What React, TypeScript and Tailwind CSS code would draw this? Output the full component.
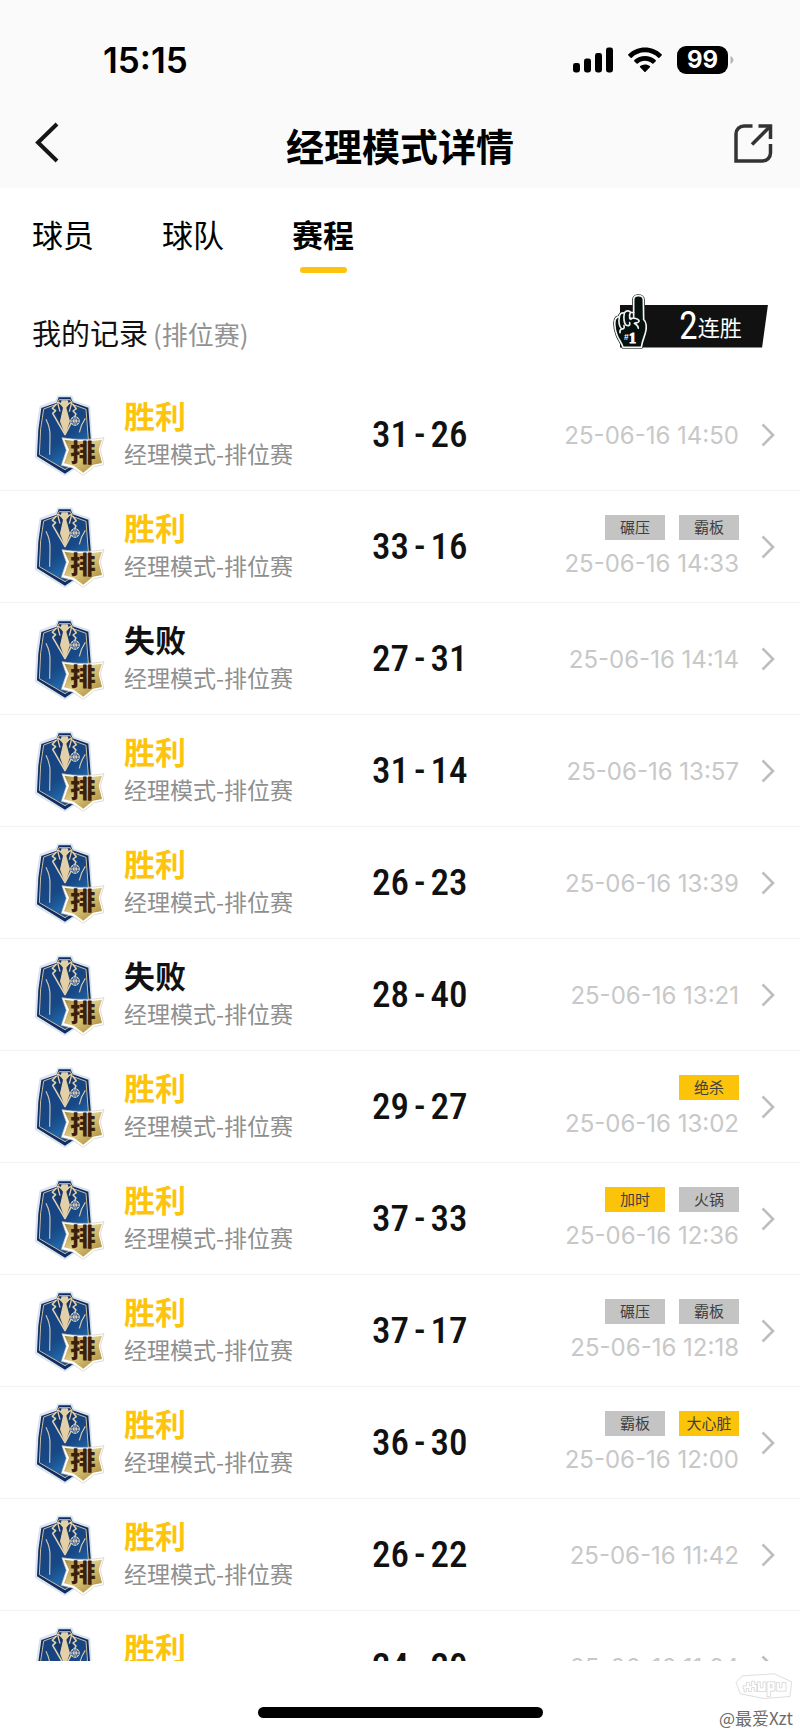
import { useId } from 'react';

type Tag = { label: string; hot?: boolean };
type Match = { win: boolean; home: number; away: number; time: string; tags?: Tag[] };

const matches: Match[] = [
  { win: true, home: 31, away: 26, time: '25-06-16 14:50' },
  { win: true, home: 33, away: 16, time: '25-06-16 14:33', tags: [{ label: '碾压' }, { label: '霸板' }] },
  { win: false, home: 27, away: 31, time: '25-06-16 14:14' },
  { win: true, home: 31, away: 14, time: '25-06-16 13:57' },
  { win: true, home: 26, away: 23, time: '25-06-16 13:39' },
  { win: false, home: 28, away: 40, time: '25-06-16 13:21' },
  { win: true, home: 29, away: 27, time: '25-06-16 13:02', tags: [{ label: '绝杀', hot: true }] },
  { win: true, home: 37, away: 33, time: '25-06-16 12:36', tags: [{ label: '加时', hot: true }, { label: '火锅' }] },
  { win: true, home: 37, away: 17, time: '25-06-16 12:18', tags: [{ label: '碾压' }, { label: '霸板' }] },
  { win: true, home: 36, away: 30, time: '25-06-16 12:00', tags: [{ label: '霸板' }, { label: '大心脏', hot: true }] },
  { win: true, home: 26, away: 22, time: '25-06-16 11:42' },
  { win: true, home: 24, away: 20, time: '25-06-16 11:24' },
];

const tabs = ['球员', '球队', '赛程'];

function StatusBar() {
  return (
    <div className="flex h-[118px] items-center justify-between pr-[66px] pl-[103px]">
      <span className="pt-[2px] font-['Inter',sans-serif] text-[35px] leading-10 font-semibold text-black">15:15</span>
      <div className="flex items-center gap-[15px] pt-px">
        <svg width="40" height="26" viewBox="0 0 40 26" aria-hidden="true">
          <rect x="0" y="16" width="7" height="9.5" rx="2.4" />
          <rect x="11" y="11.5" width="7" height="14" rx="2.4" />
          <rect x="22" y="6" width="7" height="19.5" rx="2.4" />
          <rect x="33" y="0.5" width="7" height="25" rx="2.4" />
        </svg>
        <svg width="34" height="26" viewBox="0 0 34 26" aria-hidden="true">
          <path d="M17 .5C23.300 .5 29 2.900 33.600 7.200a.9.9 0 0 1 0 1.300l-2.200 2.200a.9.9 0 0 1-1.200 0C26.600 7.300 22 5.300 17 5.300S7.400 7.300 3.800 10.700a.9.9 0 0 1-1.200 0L.4 8.500a.9.9 0 0 1 0-1.300C5 2.900 10.700.5 17 .5z" />
          <path d="M17 9c4 0 7.700 1.500 10.600 4.100a.9.9 0 0 1 0 1.300l-2.200 2.200a.9.9 0 0 1-1.200 0C22.200 14.800 19.700 13.800 17 13.800s-5.200 1-7.200 2.800a.9.9 0 0 1-1.200 0l-2.200-2.200a.9.9 0 0 1 0-1.300C9.300 10.500 13 9 17 9z" />
          <path d="M17 17.400c1.800 0 3.500.6 4.900 1.700.4.300.4.900 0 1.200l-4.300 4.400a.9.9 0 0 1-1.200 0l-4.300-4.400c-.4-.3-.4-.9 0-1.200a7.900 7.900 0 0 1 4.900-1.700z" />
        </svg>
        <div className="flex items-center gap-[2px]">
          <span className="flex h-7 w-[51px] items-center justify-center rounded-[9px] bg-black font-['Inter',sans-serif] text-[24px] leading-7 font-bold text-white">
            99
          </span>
          <svg width="4" height="8" viewBox="0 0 4 8" aria-hidden="true">
            <path d="M.5 0C2.300 1 3.400 2.300 3.400 4S2.300 7 .5 8z" fill="#b5b5b5" />
          </svg>
        </div>
      </div>
    </div>
  );
}

function Crest() {
  const id = useId();
  const coat = `${id}coat`;
  const gold = `${id}gold`;
  return (
    <svg className="h-[82px] w-[71px] shrink-0" viewBox="42 45 213 246" role="img" aria-label="排位赛">
      <defs>
        <linearGradient id={coat} x1="0" y1="0" x2="0.5" y2="1">
          <stop offset="0" stopColor="#173f7c" />
          <stop offset="0.65" stopColor="#184886" />
          <stop offset="0.88" stopColor="#2066a8" />
          <stop offset="1" stopColor="#174c88" />
        </linearGradient>
        <linearGradient id={gold} x1="0" y1="0" x2="1" y2="1">
          <stop offset="0" stopColor="#a98a3f" />
          <stop offset="0.45" stopColor="#dccb85" />
          <stop offset="0.65" stopColor="#c9af5e" />
          <stop offset="1" stopColor="#a5853a" />
        </linearGradient>
      </defs>
      <path d="M113 51h43l5 14 48 17 6 96v56l-80 55-89-53 4-88 10-66 48-17z" fill="#dbe8f6" stroke="#c9d9ec" strokeWidth="2" />
      <path d="M116 55h36l6 15 47 16 7 92v54l-77 52-84-52 4-80 9-65 46-16z" fill="#122d5e" />
      <path d="M117 62h34l6 14 41 15 7 90v46l-70 45-77-45 4-78 9-59 41-15z" fill={`url(#${coat})`} stroke="#cdbf9e" strokeWidth="3" />
      <path d="M112 66h44l8 28-29 76-31-76z" fill="#17386c" />
      <path d="M112 68l22 14 22-14M112 68l8 30M156 68l-8 30" fill="none" stroke="#e0cfaa" strokeWidth="4" strokeLinejoin="round" />
      <path d="M125 64h18l4 12-8 10 11 41-15 42-15-42 9-41-8-10z" fill="#e3d0a8" />
      <path
        d="M110 74l-13 14 10 7-9 8 37 64 33-62-9-9 10-7-12-15"
        fill="none"
        stroke="#e3d3ae"
        strokeWidth="4.500"
        strokeLinejoin="round"
      />
      <g fill="none" stroke="#d6d0c2" strokeWidth="3">
        <circle cx="165" cy="126" r="13" fill="#1b4785" />
        <path d="M152 126h26M165 113v26M157 116c5 6 5 14 0 20M173 116c-5 6-5 14 0 20" />
      </g>
      <path d="M78 121c9 18 13 34 12 52l-1 54M196 118c-10 14-15 28-18 42" fill="none" stroke="#d0c5aa" strokeWidth="3.500" />
      <path d="M126 176c42 7 84 7 126 0l-11 36 11 45-29 6-33 26-32-22-34-8 15-45z" fill="#fff" stroke="#cfcabd" strokeWidth="2" />
      <path d="M133 182c38 6 76 6 113 0l-10 30 10 40-27 5-29 24-29-21-29-7 15-41z" fill={`url(#${gold})`} />
      <text x="189" y="248" textAnchor="middle" fontSize="76" fontWeight="900" fill="#3b210b" fontFamily="'Noto Sans CJK SC', sans-serif">
        排
      </text>
    </svg>
  );
}

function FoamFinger() {
  return (
    <svg className="absolute top-[-11px] left-[-7px] h-[55px] w-[34px]" viewBox="68 40 102 165" aria-hidden="true">
      <path
        d="M98 200c-4-14-12-22-17-34-6-15-9-33-7-45 1-9 7-13 13-12 0-9 7-14 15-12 4-8 15-8 19-2l9 1V57c0-16 28-16 29 0l1 60c8 6 9 16 7 31-3 20-11 28-14 52z"
        fill="#06110f"
        stroke="#111"
        strokeWidth="9"
        strokeLinejoin="round"
      />
      <path
        d="M98 200c-4-14-12-22-17-34-6-15-9-33-7-45 1-9 7-13 13-12 0-9 7-14 15-12 4-8 15-8 19-2l9 1V57c0-16 28-16 29 0l1 60c8 6 9 16 7 31-3 20-11 28-14 52z"
        fill="#06110f"
        stroke="#f4f4f4"
        strokeWidth="5"
        strokeLinejoin="round"
      />
      <path
        d="M87 110c-3 13 0 30 7 34 6 2 9-2 7-9M102 98c-3 13-1 32 6 36 7 3 12-1 10-8M120 96c-3 8-2 17 2 20M118 114c12-3 27-1 28 7 1 6-11 5-14 7 7 4 12 9 12 15M130 96v16M94 144c-5 3-6 7-5 12"
        fill="none"
        stroke="#eef0ef"
        strokeWidth="5"
        strokeLinecap="round"
        strokeLinejoin="round"
      />
      <text x="101" y="178" fontSize="25" fontWeight="700" fill="#fff" fontFamily="'Liberation Sans', sans-serif">
        #
      </text>
      <text x="116" y="186" fontSize="42" fontWeight="700" fill="#fff" stroke="#fff" strokeWidth="3" fontFamily="'Liberation Serif', serif">
        1
      </text>
    </svg>
  );
}

function MatchRow({ match }: { match: Match }) {
  return (
    <li className="border-b border-[#f3f3f3]">
      <a href="#match" className="flex h-[111px] items-center pr-[25px] pl-[34px]">
        <Crest />
        <div className="ml-[19px] w-[248px] shrink-0 pb-[3px]">
          <p className={`text-[31px] leading-10 font-bold ${match.win ? 'text-[#fdc40f]' : 'text-[#111111]'}`}>
            {match.win ? '胜利' : '失败'}
          </p>
          <p className="text-[23px] leading-9 text-[#8f8f8f]">经理模式-排位赛</p>
        </div>
        <p className="flex items-center gap-[5px] font-['Roboto_Condensed',sans-serif] text-[37px] leading-10 font-medium text-[#111111]">
          <span>{match.home}</span>
          <span>-</span>
          <span>{match.away}</span>
        </p>
        <div className="ml-auto flex flex-col items-end gap-2 pt-[2px]">
          {match.tags && (
            <div className="flex gap-[14px]">
              {match.tags.map((tag) => (
                <span
                  key={tag.label}
                  className={`flex h-[25px] w-[60px] items-center justify-center text-[15px] text-[#3f3f3f] ${tag.hot ? 'bg-[#fbc30a]' : 'bg-[#c4c4c4]'}`}
                >
                  {tag.label}
                </span>
              ))}
            </div>
          )}
          <time className="font-['Inter',sans-serif] text-[24px] leading-8 whitespace-nowrap text-[#c8c8c8]">{match.time}</time>
        </div>
        <svg className="ml-[22px] h-6 w-[14px] shrink-0" viewBox="0 0 14 24" aria-hidden="true">
          <path d="M1.500 1.500 12 12 1.500 22.500" fill="none" stroke="#bdbdbd" strokeWidth="2.600" />
        </svg>
      </a>
    </li>
  );
}

export default function App() {
  return (
    <div className="relative flex h-screen flex-col bg-white font-['Noto_Sans_CJK_SC',sans-serif] text-[#111111]">
      <header className="bg-[#fafafa]">
        <StatusBar />
        <div className="grid h-[70px] grid-cols-[1fr_auto_1fr] items-start pr-[27px] pl-[27px]">
          <button type="button" aria-label="返回" className="mt-1 justify-self-start pl-2">
            <svg width="24" height="42" viewBox="0 0 24 42" aria-hidden="true">
              <path d="M22 2 3 20.500 22 39" fill="none" stroke="#161616" strokeWidth="4" />
            </svg>
          </button>
          <h1 className="mt-[2px] text-[38px] leading-[50px] font-bold text-black">经理模式详情</h1>
          <button type="button" aria-label="分享" className="mt-[6px] justify-self-end">
            <svg width="39" height="39" viewBox="0 0 39 39" fill="none" stroke="#333" strokeWidth="3.500" aria-hidden="true">
              <path d="M18.500 2H10a8 8 0 0 0-8 8v27h26.500a8 8 0 0 0 8-8v-9" />
              <path d="M24.500 2h12v13" />
              <path d="M36 2.500 18 20.500" />
            </svg>
          </button>
        </div>
      </header>

      <nav className="flex gap-[68px] pt-[23px] pl-8" aria-label="分类">
        {tabs.map((tab) => {
          const active = tab === '赛程';
          return (
            <button
              key={tab}
              type="button"
              aria-current={active ? 'page' : undefined}
              className={`flex flex-col items-center gap-[10px] text-[31px] leading-[46px] text-black ${active ? 'font-bold' : ''}`}
            >
              {tab}
              <span className={`h-[6px] w-[47px] rounded-full ${active ? 'bg-[#fcc40f]' : ''}`} />
            </button>
          );
        })}
      </nav>

      <div className="flex h-[106px] items-center justify-between pr-8 pl-8">
        <h2 className="flex items-baseline gap-[5px] pt-[14px] text-[29px] leading-10">
          我的记录
          <span className="text-[26px] text-[#929292]">(排位赛)</span>
        </h2>
        <div className="relative w-[148px]">
          <p className="flex h-[43px] items-center bg-[#111111] pl-[59px] text-white [clip-path:polygon(0_0,100%_0,96%_100%,0_100%)]">
            <span className="font-['Roboto_Condensed',sans-serif] text-[38px] leading-[43px]">2</span>
            <span className="text-[22px] leading-[43px]">连胜</span>
          </p>
          <FoamFinger />
        </div>
      </div>

      <ul className="min-h-0 flex-1 overflow-y-auto [scrollbar-width:none]">
        {matches.map((match) => (
          <MatchRow key={match.time} match={match} />
        ))}
      </ul>

      <footer className="flex h-[73px] shrink-0 items-end justify-center pb-4">
        <div className="h-[11px] w-[285px] rounded-full bg-black" />
      </footer>

      <div className="absolute right-[7px] bottom-[2px] flex flex-col items-end">
        <svg width="58" height="27" viewBox="0 0 174 80" fill="#fff" stroke="#cccccc" strokeWidth="2" aria-hidden="true">
          <path d="M3 28 22 8 118 2l52 24-5 44-78 6-71-14z" />
          <path d="M24 38h10V28h10v10h6V24h9v10h8v20h-9V43h-8v12h-9v-9h-7v10h-7V46h-3zM66 26h10v18h8V26h9v29H66zM96 26h24v28h-14v16H96zm10 8v10h5V34zM124 28h9v16h8V28h12v26h-29z" />
        </svg>
        <p className="mt-1 text-[17px] leading-7 text-[#6b6b6b]">@最爱Xzt</p>
      </div>
    </div>
  );
}
